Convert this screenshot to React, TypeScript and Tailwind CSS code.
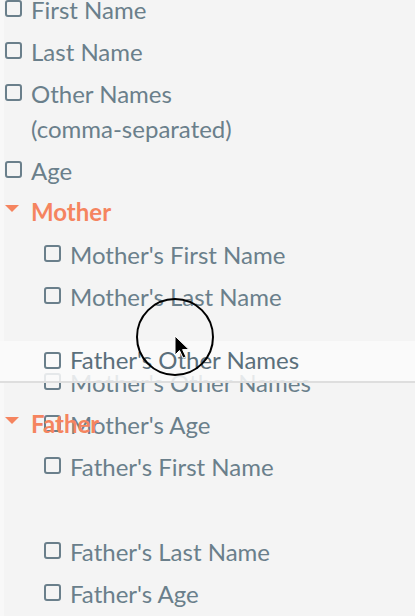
import React from "react";

const Box = () => (
  <span className="block w-[17px] h-[17px] shrink-0 rounded-[3px] border-2 border-[#6a7f8b] mr-[9px] -mt-[2px]" />
);

const Field = ({ label, indent = false }: { label: React.ReactNode; indent?: boolean }) => (
  <div className={`flex items-start py-[3.5px] ${indent ? "pl-[44px]" : "pl-[5px]"}`}>
    <div className="h-[35px] flex items-center">
      <Box />
    </div>
    <div className="leading-[35px]">{label}</div>
  </div>
);

const Header = ({ label, overlap = false }: { label: string; overlap?: boolean }) => (
  <div className={`flex items-center h-[42px] pl-[5px] ${overlap ? "-mt-[42px]" : ""}`}>
    <svg width="14" height="8" viewBox="0 0 14 8" className="mr-[12px] -mt-[6px]">
      <path d="M0 0 L14 0 L7 7 Z" fill="#f5845f" />
    </svg>
    <span className="font-bold text-[#f5845f]">{label}</span>
  </div>
);

export default function App() {
  return (
    <div
      className="relative w-[415px] h-[616px] overflow-hidden bg-[#f4f4f4] text-[24px] text-[#6a7f8b]"
      style={{ fontFamily: "Lato, 'Open Sans', sans-serif" }}
    >
      <div className="absolute left-0 top-0 bottom-0 w-[4px] bg-[#f8f8f8]" />
      <div className="flex flex-col -mt-[12px]">
        <Field label="First Name" />
        <Field label="Last Name" />
        <Field label={<>Other Names<br />(comma-separated)</>} />
        <Field label="Age" />
        <Header label="Mother" />
        <Field indent label="Mother's First Name" />
        <Field indent label="Mother's Last Name" />
        <div className="h-[44px]" />
        <Field indent label="Mother's Other Names" />
        <Field indent label="Mother's Age" />
        <Header label="Father" overlap />
        <Field indent label="Father's First Name" />
        <div className="h-[43px]" />
        <Field indent label="Father's Last Name" />
        <Field indent label="Father's Age" />
      </div>

      {/* dragged item */}
      <div className="absolute left-0 right-0 top-[341px] h-[42px] bg-[#fafafa]/85 border-b-2 border-[#dedede] flex items-center pl-[44px]">
        <Box />
        <span className="text-[#5a6f7b] -mt-[2px]">Father's Other Names</span>
      </div>

      {/* touch cursor */}
      <div className="absolute left-[136px] top-[298px] w-[78px] h-[78px] rounded-full border-2 border-black" />
      <svg className="absolute left-[174px] top-[335px]" width="18" height="26" viewBox="0 0 18 26">
        <path d="M1 1 L1 20 L5.5 15.5 L9 23 L12 21.8 L8.6 14.6 L15 14.6 Z" fill="#000" stroke="#fff" strokeWidth="1" />
      </svg>
    </div>
  );
}
